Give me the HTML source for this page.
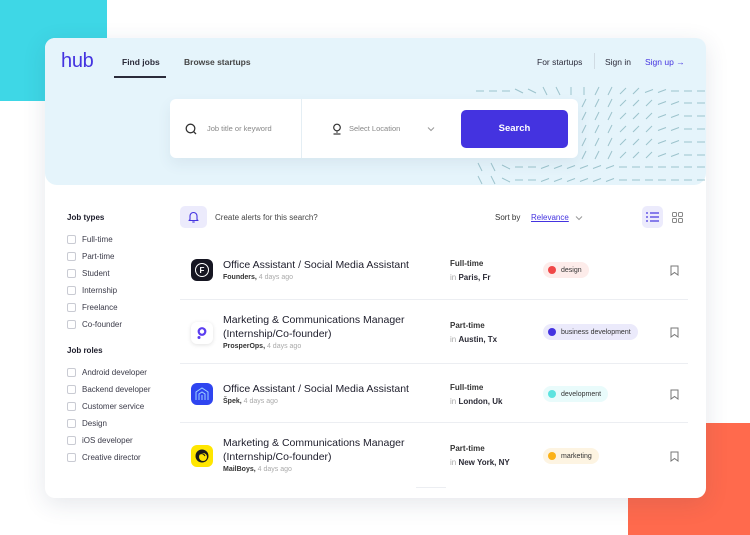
<!DOCTYPE html>
<html><head><meta charset="utf-8">
<style>
*{margin:0;padding:0;box-sizing:border-box}
body{width:750px;height:535px;background:#fff;position:relative;overflow:hidden;font-family:"Liberation Sans",sans-serif;color:#1d1d2b}
.abs{position:absolute}
.cyan{left:0;top:0;width:107px;height:101px;background:#3ed7e6}
.orange{left:628px;top:423px;width:122px;height:112px;background:#ff6a4d}
.card{left:45px;top:38px;width:661px;height:460px;background:#fff;border-radius:10px;box-shadow:0 6px 24px rgba(40,60,90,.12);overflow:hidden}
.hero{left:0;top:0;width:661px;height:147px;background:#e5f4fb;border-radius:0 0 12px 12px}
.t{position:absolute;white-space:nowrap}
.nav{font-size:8.5px;color:#2b2b3a}
.sbox{left:125px;top:61px;width:408px;height:59px;background:#fff;border-radius:6px;box-shadow:0 6px 14px rgba(60,90,120,.08)}
.btn{left:416px;top:72px;width:107px;height:38px;background:#4433e0;border-radius:5px;color:#fff;font-size:9.5px;font-weight:bold;text-align:center;line-height:38px}
.side{font-size:8px;color:#3a3a48}
.cb{position:absolute;width:9px;height:9px;border:1px solid #c9cbd3;border-radius:2px}
.h{font-size:8px;font-weight:bold;color:#1d1d2b}
.title{font-size:10.5px;color:#1d1d2b}
.meta{font-size:7px;color:#aaa}
.meta b{color:#333;font-weight:bold}
.typ{font-size:8px;font-weight:bold;color:#333}
.loc{font-size:8px;color:#aaa}
.loc b{color:#2a2a35}
.tag{position:absolute;height:16px;border-radius:8px;font-size:7px;color:#333;display:flex;align-items:center;padding-left:18px;padding-right:7px}
.tag i{position:absolute;left:5px;top:4px;width:8px;height:8px;border-radius:50%}
.div{position:absolute;left:135px;width:508px;height:1px;background:#eceef2}
.logo{position:absolute;left:146px;width:22px;height:22px;border-radius:6px}
</style></head><body>
<div class="abs cyan"></div>
<div class="abs orange"></div>
<div class="abs card">
  <div class="abs hero"></div>
  <svg class="abs" style="left:0;top:0" width="661" height="147">
    <defs>
      <g id="h"><line x1="-4" y1="0" x2="4" y2="0"/></g>
      <g id="b"><line x1="-4" y1="-2" x2="4" y2="2"/></g>
      <g id="v"><line x1="-2" y1="-4" x2="2" y2="4"/></g>
      <g id="l"><line x1="0" y1="-4" x2="0" y2="4"/></g>
      <g id="s"><line x1="-2" y1="4" x2="2" y2="-4"/></g>
      <g id="d"><line x1="-3" y1="3" x2="3" y2="-3"/></g>
      <g id="f"><line x1="-4" y1="1.5" x2="4" y2="-1.5"/></g>
    </defs>
    <g stroke="#9cc3cc" stroke-width="1" transform="translate(-45,-38)">
      <use href="#h" x="480" y="91"/><use href="#h" x="493" y="91"/><use href="#h" x="506" y="91"/><use href="#b" x="519" y="91"/><use href="#b" x="532" y="91"/><use href="#v" x="545" y="91"/><use href="#v" x="558" y="91"/><use href="#l" x="571" y="91"/><use href="#l" x="584" y="91"/><use href="#s" x="597" y="91"/><use href="#s" x="610" y="91"/><use href="#d" x="623" y="91"/><use href="#d" x="636" y="91"/><use href="#f" x="649" y="91"/><use href="#f" x="662" y="91"/><use href="#h" x="675" y="91"/><use href="#h" x="688" y="91"/><use href="#h" x="701" y="91"/>
      <g id="row">
      <use href="#s" x="584" y="103"/><use href="#s" x="597" y="103"/><use href="#s" x="610" y="103"/><use href="#d" x="623" y="103"/><use href="#d" x="636" y="103"/><use href="#d" x="649" y="103"/><use href="#f" x="662" y="103"/><use href="#f" x="675" y="103"/><use href="#h" x="688" y="103"/><use href="#h" x="701" y="103"/>
      </g>
      <use href="#row" y="13"/><use href="#row" y="26"/><use href="#row" y="39"/><use href="#row" y="52"/>
      <g id="r2">
      <use href="#v" x="480" y="167"/><use href="#v" x="493" y="167"/><use href="#b" x="506" y="167"/><use href="#h" x="519" y="167"/><use href="#h" x="532" y="167"/><use href="#f" x="545" y="167"/><use href="#f" x="558" y="167"/><use href="#f" x="571" y="167"/><use href="#f" x="584" y="167"/><use href="#f" x="597" y="167"/><use href="#f" x="610" y="167"/><use href="#h" x="623" y="167"/><use href="#h" x="636" y="167"/><use href="#h" x="649" y="167"/><use href="#h" x="662" y="167"/><use href="#h" x="675" y="167"/><use href="#h" x="688" y="167"/><use href="#h" x="701" y="167"/>
      </g>
      <use href="#r2" y="13"/>
    </g>
  </svg>
  <div class="t" style="left:16px;top:12px;font-size:20px;color:#4433e0;letter-spacing:-0.3px;font-weight:normal">hub</div>
  <div class="t nav" style="left:77px;top:19px;font-weight:bold">Find jobs</div>
  <div class="abs" style="left:69px;top:38px;width:52px;height:1.5px;background:#2b2b3a"></div>
  <div class="t nav" style="left:139px;top:19px;font-weight:bold;color:#444">Browse startups</div>
  <div class="t nav" style="left:492px;top:19px">For startups</div>
  <div class="abs" style="left:549px;top:15px;width:1px;height:16px;background:#d0dbe3"></div>
  <div class="t nav" style="left:560px;top:19px">Sign in</div>
  <div class="t nav" style="left:600px;top:19px;color:#4433e0">Sign up →</div>

  <div class="abs sbox">
    <div class="abs" style="left:131px;top:0;width:1px;height:59px;background:#e4eef4"></div>
    <svg class="abs" style="left:15px;top:24px" width="12" height="12"><circle cx="5.5" cy="5.5" r="4.3" fill="none" stroke="#333" stroke-width="1.3"/><line x1="8.6" y1="8.6" x2="11" y2="11" stroke="#333" stroke-width="1.3"/></svg>
    <div class="t" style="left:37px;top:25px;font-size:7.5px;color:#888">Job title or keyword</div>
    <svg class="abs" style="left:162px;top:24px" width="10" height="12"><circle cx="5" cy="4.5" r="3.3" fill="none" stroke="#333" stroke-width="1.2"/><line x1="5" y1="8" x2="5" y2="10" stroke="#333"/><line x1="1.5" y1="11" x2="8.5" y2="11" stroke="#333" stroke-width="1.2"/></svg>
    <div class="t" style="left:179px;top:25px;font-size:7.5px;color:#888">Select Location</div>
    <svg class="abs" style="left:257px;top:27px" width="8" height="6"><path d="M1 1.5L4 4.5L7 1.5" fill="none" stroke="#999" stroke-width="1"/></svg>
  </div>
  <div class="abs btn">Search</div>

  <div class="t h" style="left:22px;top:175px">Job types</div>
  <div class="cb" style="left:22px;top:197px"></div><div class="t side" style="left:37px;top:197px">Full-time</div>
  <div class="cb" style="left:22px;top:214px"></div><div class="t side" style="left:37px;top:214px">Part-time</div>
  <div class="cb" style="left:22px;top:231px"></div><div class="t side" style="left:37px;top:231px">Student</div>
  <div class="cb" style="left:22px;top:248px"></div><div class="t side" style="left:37px;top:248px">Internship</div>
  <div class="cb" style="left:22px;top:265px"></div><div class="t side" style="left:37px;top:265px">Freelance</div>
  <div class="cb" style="left:22px;top:282px"></div><div class="t side" style="left:37px;top:282px">Co-founder</div>
  <div class="t h" style="left:22px;top:308px">Job roles</div>
  <div class="cb" style="left:22px;top:330px"></div><div class="t side" style="left:37px;top:330px">Android developer</div>
  <div class="cb" style="left:22px;top:347px"></div><div class="t side" style="left:37px;top:347px">Backend developer</div>
  <div class="cb" style="left:22px;top:364px"></div><div class="t side" style="left:37px;top:364px">Customer service</div>
  <div class="cb" style="left:22px;top:381px"></div><div class="t side" style="left:37px;top:381px">Design</div>
  <div class="cb" style="left:22px;top:398px"></div><div class="t side" style="left:37px;top:398px">iOS developer</div>
  <div class="cb" style="left:22px;top:415px"></div><div class="t side" style="left:37px;top:415px">Creative director</div>

  <div class="abs" style="left:135px;top:168px;width:27px;height:22px;background:#ecebfc;border-radius:5px"></div>
  <svg class="abs" style="left:143px;top:173px" width="11" height="12"><path d="M2 8.5V5a3.5 3.5 0 0 1 7 0v3.5l1 1H1z" fill="none" stroke="#4433e0" stroke-width="1.1" stroke-linejoin="round"/><path d="M4.3 11h2.4" stroke="#4433e0" stroke-width="1.1"/></svg>
  <div class="t" style="left:170px;top:175px;font-size:8px;color:#444">Create alerts for this search?</div>
  <div class="t" style="left:450px;top:175px;font-size:8px;color:#333">Sort by</div>
  <div class="t" style="left:486px;top:175px;font-size:8px;color:#4433e0;text-decoration:underline">Relevance</div>
  <svg class="abs" style="left:530px;top:177px" width="8" height="6"><path d="M1 1.5L4 4.5L7 1.5" fill="none" stroke="#999"/></svg>
  <div class="abs" style="left:597px;top:168px;width:21px;height:22px;background:#ecebfc;border-radius:5px"></div>
  <svg class="abs" style="left:601px;top:174px" width="13" height="10" stroke="#4433e0" stroke-width="1.2"><line x1="0" y1="1" x2="2" y2="1"/><line x1="4" y1="1" x2="13" y2="1"/><line x1="0" y1="5" x2="2" y2="5"/><line x1="4" y1="5" x2="13" y2="5"/><line x1="0" y1="9" x2="2" y2="9"/><line x1="4" y1="9" x2="13" y2="9"/></svg>
  <svg class="abs" style="left:627px;top:174px" width="11" height="11" fill="none" stroke="#888" stroke-width="1"><rect x="0.5" y="0.5" width="4" height="4" rx="1"/><rect x="6.5" y="0.5" width="4" height="4" rx="1"/><rect x="0.5" y="6.5" width="4" height="4" rx="1"/><rect x="6.5" y="6.5" width="4" height="4" rx="1"/></svg>

  <div class="logo" style="top:221px;background:#161622"><svg width="22" height="22"><circle cx="11" cy="11" r="6.5" fill="none" stroke="#fff" stroke-width="1"/><text x="11" y="14" font-size="8" font-weight="bold" fill="#fff" text-anchor="middle" font-family="Liberation Sans">F</text></svg></div>
  <div class="t title" style="left:178px;top:221px">Office Assistant / Social Media Assistant</div>
  <div class="t meta" style="left:178px;top:236px"><b>Founders,</b> 4 days ago</div>
  <div class="t typ" style="left:405px;top:221px">Full-time</div>
  <div class="t loc" style="left:405px;top:235px">in <b>Paris, Fr</b></div>
  <div class="tag" style="left:498px;top:224px;background:#fdecea"><i style="background:#f04848"></i>design</div>
  <svg class="abs" style="left:625px;top:227px" width="9" height="11"><path d="M1 1h7v9L4.5 7.5 1 10z" fill="none" stroke="#777" stroke-width="1"/></svg>
  <div class="div" style="top:261px"></div>

  <div class="logo" style="top:284px;background:#fff;box-shadow:0 1px 4px rgba(0,0,0,.12)"><svg width="22" height="22"><circle cx="11" cy="9.5" r="3.3" fill="none" stroke="#5b3df0" stroke-width="2.2"/><circle cx="8" cy="15.5" r="1.5" fill="#5b3df0"/></svg></div>
  <div class="t title" style="left:178px;top:276px">Marketing &amp; Communications Manager</div>
  <div class="t title" style="left:178px;top:290px">(Internship/Co-founder)</div>
  <div class="t meta" style="left:178px;top:305px"><b>ProsperOps,</b> 4 days ago</div>
  <div class="t typ" style="left:405px;top:283px">Part-time</div>
  <div class="t loc" style="left:405px;top:297px">in <b>Austin, Tx</b></div>
  <div class="tag" style="left:498px;top:286px;background:#ebeafb"><i style="background:#4433e0"></i>business development</div>
  <svg class="abs" style="left:625px;top:289px" width="9" height="11"><path d="M1 1h7v9L4.5 7.5 1 10z" fill="none" stroke="#777" stroke-width="1"/></svg>
  <div class="div" style="top:325px"></div>

  <div class="logo" style="top:345px;background:#2f45f0"><svg width="22" height="22" fill="none" stroke="#9fd4ff" stroke-width="1"><path d="M5 17V9l6-4 6 4v8"/><path d="M8 17v-6l3-2 3 2v6"/><line x1="11" y1="12" x2="11" y2="17"/></svg></div>
  <div class="t title" style="left:178px;top:345px">Office Assistant / Social Media Assistant</div>
  <div class="t meta" style="left:178px;top:360px"><b>Špek,</b> 4 days ago</div>
  <div class="t typ" style="left:405px;top:345px">Full-time</div>
  <div class="t loc" style="left:405px;top:359px">in <b>London, Uk</b></div>
  <div class="tag" style="left:498px;top:348px;background:#e9fbfb"><i style="background:#5de3df"></i>development</div>
  <svg class="abs" style="left:625px;top:351px" width="9" height="11"><path d="M1 1h7v9L4.5 7.5 1 10z" fill="none" stroke="#777" stroke-width="1"/></svg>
  <div class="div" style="top:384px"></div>

  <div class="logo" style="top:407px;background:#ffe600"><svg width="22" height="22"><circle cx="11" cy="11" r="6.5" fill="#1a1a1a"/><circle cx="12" cy="12" r="4" fill="#ffe600"/><path d="M9 9c2-1 4 0 5 2" stroke="#1a1a1a" fill="none"/></svg></div>
  <div class="t title" style="left:178px;top:399px">Marketing &amp; Communications Manager</div>
  <div class="t title" style="left:178px;top:413px">(Internship/Co-founder)</div>
  <div class="t meta" style="left:178px;top:428px"><b>MailBoys,</b> 4 days ago</div>
  <div class="t typ" style="left:405px;top:406px">Part-time</div>
  <div class="t loc" style="left:405px;top:420px">in <b>New York, NY</b></div>
  <div class="tag" style="left:498px;top:410px;background:#fdf4e2"><i style="background:#fbb218"></i>marketing</div>
  <svg class="abs" style="left:625px;top:413px" width="9" height="11"><path d="M1 1h7v9L4.5 7.5 1 10z" fill="none" stroke="#777" stroke-width="1"/></svg>
  <div class="abs" style="left:371px;top:449px;width:30px;height:1px;background:#eceef2"></div>
</div>
</body></html>
